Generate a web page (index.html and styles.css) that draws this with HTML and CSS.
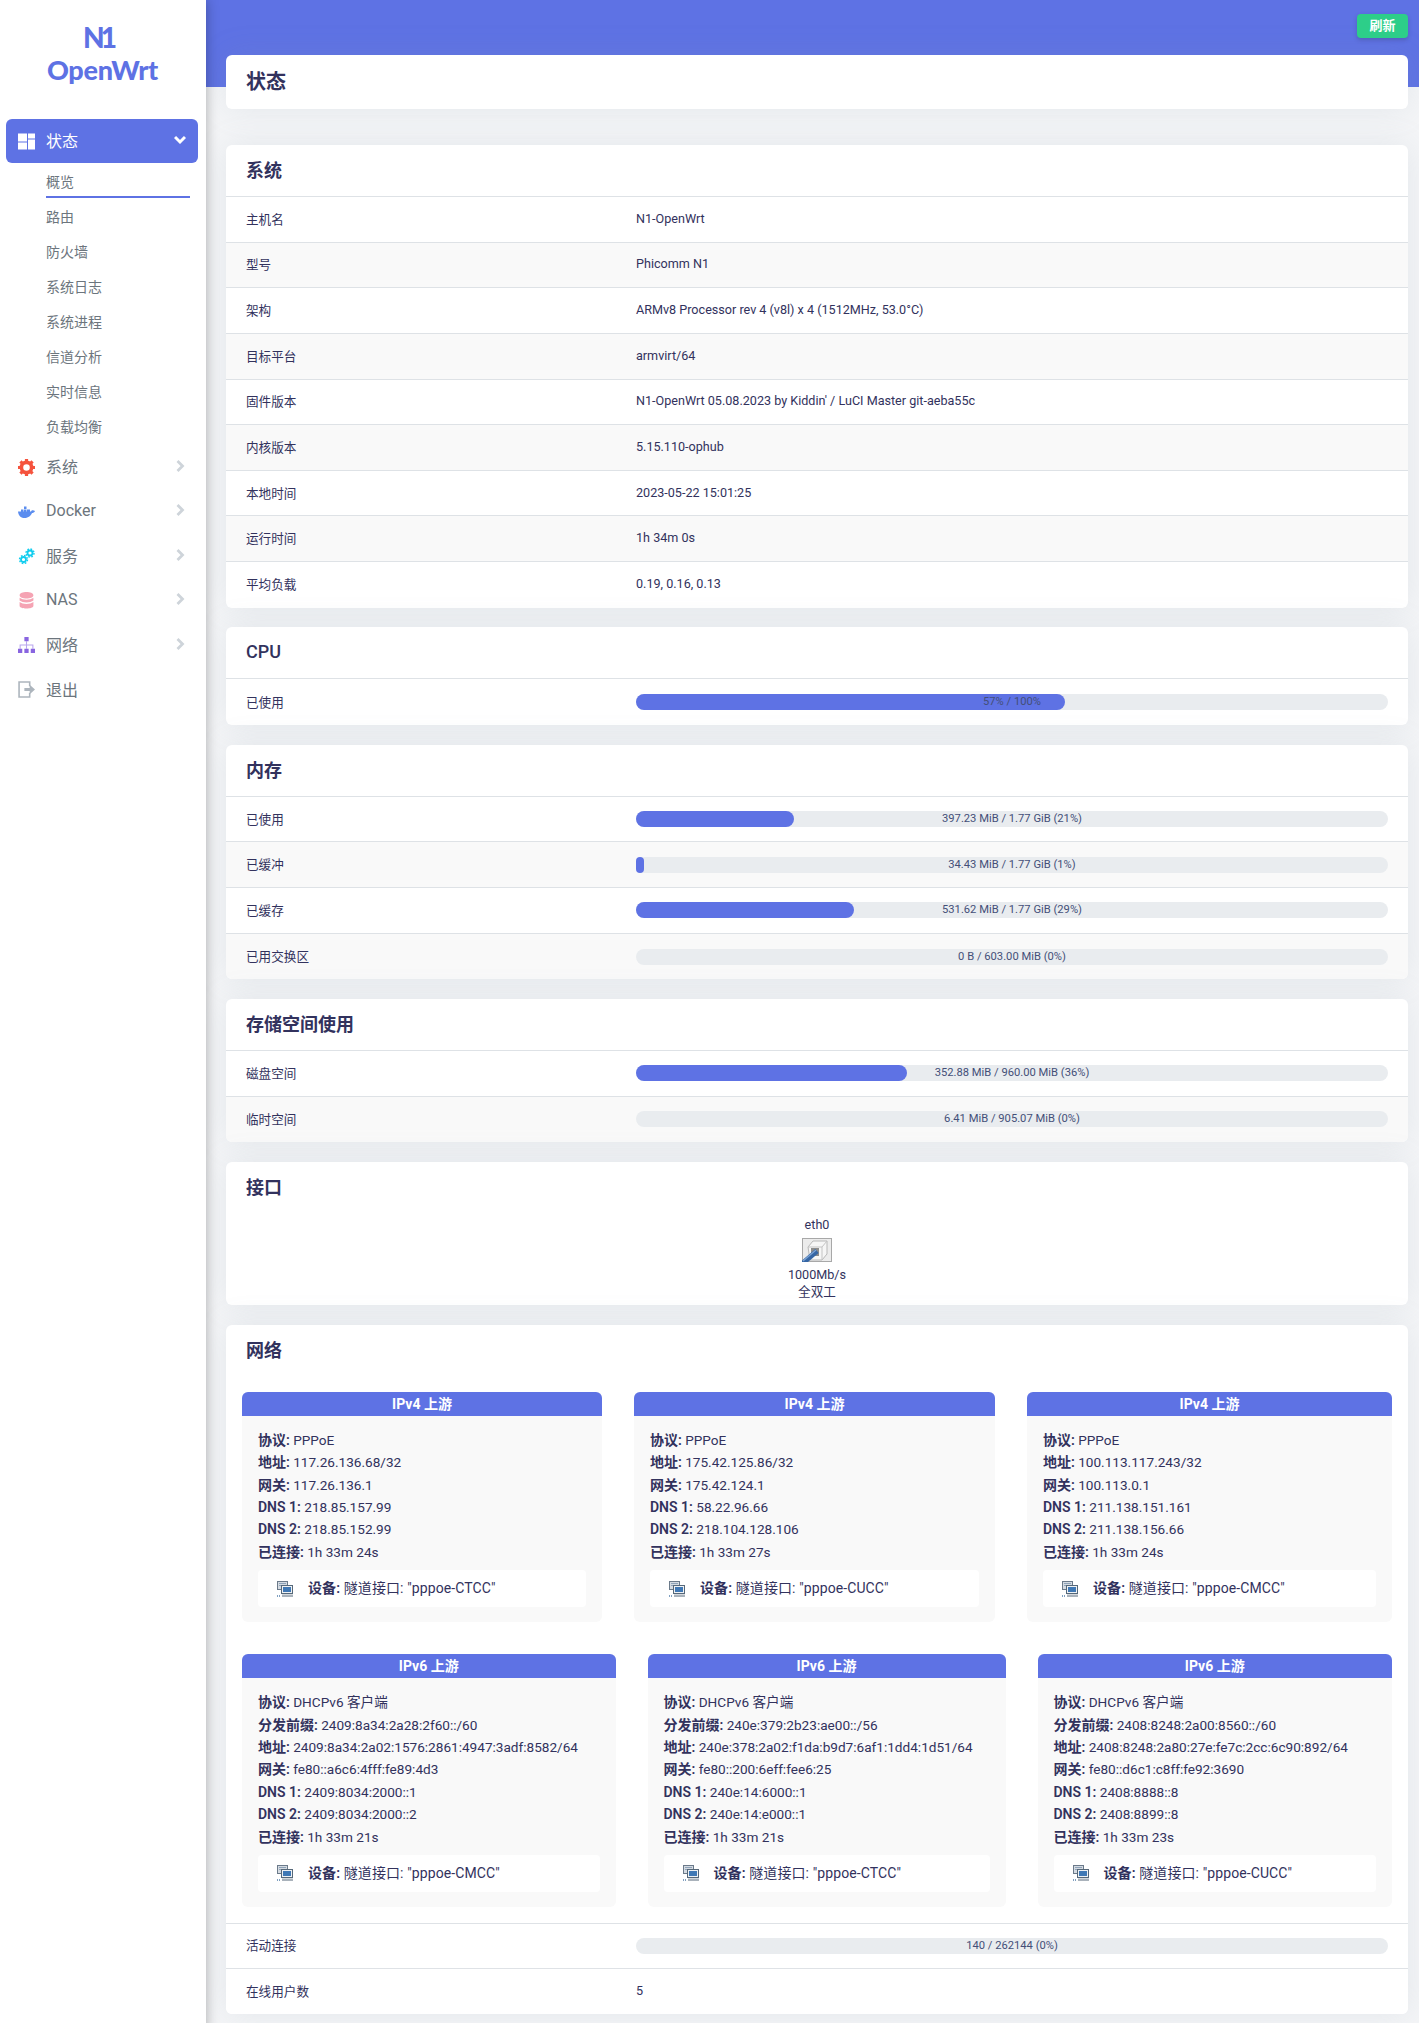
FILE: index.html
```html
<!DOCTYPE html>
<html>
<head>
  <title>状态 - N1-OpenWrt</title>
  <link rel="stylesheet" href="styles.css">
</head>
<body>
  <svg class="icon-defs">
    <symbol id="chevron-right" viewBox="0 0 12 12"><path d="M3.500 1l5 5-5 5" fill="none" stroke="#ced4da" stroke-width="2.800"/></symbol>
    <symbol id="device" viewBox="0 0 16 16">
      <rect x="0.500" y="0.500" width="10" height="8" fill="#d5dbe2" stroke="#6b7a8a"/>
      <path d="M2 2h7v1H2zM2 4h3v1H2z" fill="#8fa3b8"/>
      <rect x="4.500" y="4.500" width="11" height="8" fill="#eef1f4" stroke="#566879"/>
      <rect x="6" y="6" width="8" height="5" fill="#3f78b5"/>
      <path d="M5 13.500h11V16H5z" fill="#a9b2bb"/>
      <path d="M0 14h1v2H0zM2 14h1v2H2z" fill="#7f9fc0"/>
    </symbol>
  </svg>

  <div class="sidebar">
    <div class="logo">
      <div class="logo-n1">N1</div>
      <div class="logo-name">OpenWrt</div>
    </div>
    <div class="menu-item active">
      <svg class="menu-icon" viewBox="0 0 17 16"><path fill="#fff" d="M0 0h9v8H0zM10 0h7v5h-7zM0 9h9v7H0zM10 6h7v10h-7z"/></svg>
      <span>状态</span>
      <svg class="chevron" viewBox="0 0 12 12"><path d="M1 3l5 5 5-5" fill="none" stroke="#fff" stroke-width="3"/></svg>
    </div>
    <div class="sub-item current">概览</div>
    <div class="sub-item">路由</div>
    <div class="sub-item">防火墙</div>
    <div class="sub-item">系统日志</div>
    <div class="sub-item">系统进程</div>
    <div class="sub-item">信道分析</div>
    <div class="sub-item">实时信息</div>
    <div class="sub-item last">负载均衡</div>
    <div class="menu-item">
      <svg class="menu-icon" viewBox="0 0 16 16"><circle cx="8" cy="8" r="4.800" fill="none" stroke="#f5533d" stroke-width="3.400"/><path stroke="#f5533d" stroke-width="3" d="M8 0v3M8 13v3M0 8h3M13 8h3M2.300 2.300l2 2M11.700 11.700l2 2M13.700 2.300l-2 2M4.300 11.700l-2 2"/></svg>
      <span>系统</span>
      <svg class="chevron"><use href="#chevron-right"/></svg>
    </div>
    <div class="menu-item">
      <svg class="menu-icon" viewBox="0 0 17 16"><path fill="#5b8def" d="M0 8h3V6h2.500V8h.5V6h2.500V8h.5V6H12v2h1c.5-1.500 2.500-1.500 4-.5-.5 1.500-2 2-3 2-1 2.500-3.500 5-7.500 5C2.500 14.500.5 12 0 8zM6 3h2.500v2.500H6z"/></svg>
      <span>Docker</span>
      <svg class="chevron"><use href="#chevron-right"/></svg>
    </div>
    <div class="menu-item">
      <svg class="menu-icon" viewBox="0 0 17 16">
        <g fill="none" stroke="#11cdef">
          <circle cx="5.500" cy="11" r="2.500" stroke-width="1.800"/>
          <circle cx="5.500" cy="11" r="4" stroke-width="1.400" stroke-dasharray="1.700 1.440"/>
          <circle cx="12" cy="4.500" r="2.500" stroke-width="1.800"/>
          <circle cx="12" cy="4.500" r="4" stroke-width="1.400" stroke-dasharray="1.700 1.440"/>
        </g>
      </svg>
      <span>服务</span>
      <svg class="chevron"><use href="#chevron-right"/></svg>
    </div>
    <div class="menu-item">
      <svg class="menu-icon" viewBox="0 0 16 16"><path fill="#f5a3b3" d="M1.500 3c0-4 13-4 13 0s-13 4-13 0zM1.500 5.500c3 2.500 10 2.500 13 0V8c-3 2.500-10 2.500-13 0zM1.500 9.500c3 2.500 10 2.500 13 0V13c0 3.500-13 3.500-13 0z"/></svg>
      <span>NAS</span>
      <svg class="chevron"><use href="#chevron-right"/></svg>
    </div>
    <div class="menu-item">
      <svg class="menu-icon" viewBox="0 0 16 16"><path fill="none" stroke="#b9a6ee" d="M8 4v7M2 11V7.500h12V11"/><path fill="#8965e0" d="M6 0h4v4H6zM0 11h4v4H0zM6 11h4v4H6zM12 11h4v4h-4z"/></svg>
      <span>网络</span>
      <svg class="chevron"><use href="#chevron-right"/></svg>
    </div>
    <div class="menu-item">
      <svg class="menu-icon" viewBox="0 0 16 16"><path fill="none" stroke="#adb5bd" stroke-width="1.500" d="M11 5V1H1v14h10v-4"/><path fill="#adb5bd" d="M6 6.500h5V3.500L16 8l-5 4.500v-3H6z"/></svg>
      <span>退出</span>
    </div>
  </div>

  <div class="main">
    <div class="top-bar">
      <span class="refresh-btn">刷新</span>
    </div>
    <div class="content">
      <div class="card title-card"><h2>状态</h2></div>

      <div class="card">
        <h3>系统</h3>
        <div class="row"><div class="row-label">主机名</div><div class="row-value">N1-OpenWrt</div></div>
        <div class="row"><div class="row-label">型号</div><div class="row-value">Phicomm N1</div></div>
        <div class="row"><div class="row-label">架构</div><div class="row-value">ARMv8 Processor rev 4 (v8l) x 4 (1512MHz, 53.0°C)</div></div>
        <div class="row"><div class="row-label">目标平台</div><div class="row-value">armvirt/64</div></div>
        <div class="row"><div class="row-label">固件版本</div><div class="row-value">N1-OpenWrt 05.08.2023 by Kiddin' / LuCI Master git-aeba55c</div></div>
        <div class="row"><div class="row-label">内核版本</div><div class="row-value">5.15.110-ophub</div></div>
        <div class="row"><div class="row-label">本地时间</div><div class="row-value">2023-05-22 15:01:25</div></div>
        <div class="row"><div class="row-label">运行时间</div><div class="row-value">1h 34m 0s</div></div>
        <div class="row"><div class="row-label">平均负载</div><div class="row-value">0.19, 0.16, 0.13</div></div>
      </div>

      <div class="card">
        <h3 class="latin">CPU</h3>
        <div class="row"><div class="row-label">已使用</div><div class="progress"><div class="progress-fill" style="width: 57%"></div><span>57% / 100%</span></div></div>
      </div>

      <div class="card">
        <h3>内存</h3>
        <div class="row"><div class="row-label">已使用</div><div class="progress"><div class="progress-fill" style="width: 21%"></div><span>397.23 MiB / 1.77 GiB (21%)</span></div></div>
        <div class="row"><div class="row-label">已缓冲</div><div class="progress"><div class="progress-fill" style="width: 1%"></div><span>34.43 MiB / 1.77 GiB (1%)</span></div></div>
        <div class="row"><div class="row-label">已缓存</div><div class="progress"><div class="progress-fill" style="width: 29%"></div><span>531.62 MiB / 1.77 GiB (29%)</span></div></div>
        <div class="row"><div class="row-label">已用交换区</div><div class="progress"><span>0 B / 603.00 MiB (0%)</span></div></div>
      </div>

      <div class="card">
        <h3>存储空间使用</h3>
        <div class="row"><div class="row-label">磁盘空间</div><div class="progress"><div class="progress-fill" style="width: 36%"></div><span>352.88 MiB / 960.00 MiB (36%)</span></div></div>
        <div class="row"><div class="row-label">临时空间</div><div class="progress"><span>6.41 MiB / 905.07 MiB (0%)</span></div></div>
      </div>

      <div class="card iface-card">
        <h3 class="plain">接口</h3>
        <div class="iface">
          <div>eth0</div>
          <svg class="port-icon" viewBox="0 0 30 24">
            <rect x="0.500" y="0.500" width="29" height="23" fill="#ececec" stroke="#a8a8a8"/>
            <path d="M6 9l5-6h14v13l-5 6H8z" fill="#f6f6f6" stroke="#b8b8b8"/>
            <path d="M20 22V9l5-6M6 9h14" fill="none" stroke="#c4c4c4"/>
            <path d="M9 10h8v8H9z" fill="#8d8d8d"/>
            <path d="M1 25l14-12" stroke="#3566a5" stroke-width="5"/>
            <path d="M1 23l13-11" stroke="#7ea5d6" stroke-width="1.200"/>
          </svg>
          <div>1000Mb/s</div>
          <div>全双工</div>
        </div>
      </div>

      <div class="card">
        <h3 class="plain">网络</h3>
        <div class="net-grid net-v4">
          <div class="net-box">
            <div class="net-head">IPv4 上游</div>
            <div class="net-body">
              <div><b>协议:</b> PPPoE</div>
              <div><b>地址:</b> 117.26.136.68/32</div>
              <div><b>网关:</b> 117.26.136.1</div>
              <div><b>DNS 1:</b> 218.85.157.99</div>
              <div><b>DNS 2:</b> 218.85.152.99</div>
              <div><b>已连接:</b> 1h 33m 24s</div>
              <div class="device"><svg class="dev-icon"><use href="#device"/></svg><span><b>设备:</b> 隧道接口: "pppoe-CTCC"</span></div>
            </div>
          </div>
          <div class="net-box">
            <div class="net-head">IPv4 上游</div>
            <div class="net-body">
              <div><b>协议:</b> PPPoE</div>
              <div><b>地址:</b> 175.42.125.86/32</div>
              <div><b>网关:</b> 175.42.124.1</div>
              <div><b>DNS 1:</b> 58.22.96.66</div>
              <div><b>DNS 2:</b> 218.104.128.106</div>
              <div><b>已连接:</b> 1h 33m 27s</div>
              <div class="device"><svg class="dev-icon"><use href="#device"/></svg><span><b>设备:</b> 隧道接口: "pppoe-CUCC"</span></div>
            </div>
          </div>
          <div class="net-box">
            <div class="net-head">IPv4 上游</div>
            <div class="net-body">
              <div><b>协议:</b> PPPoE</div>
              <div><b>地址:</b> 100.113.117.243/32</div>
              <div><b>网关:</b> 100.113.0.1</div>
              <div><b>DNS 1:</b> 211.138.151.161</div>
              <div><b>DNS 2:</b> 211.138.156.66</div>
              <div><b>已连接:</b> 1h 33m 24s</div>
              <div class="device"><svg class="dev-icon"><use href="#device"/></svg><span><b>设备:</b> 隧道接口: "pppoe-CMCC"</span></div>
            </div>
          </div>
        </div>
        <div class="net-grid net-v6">
          <div class="net-box">
            <div class="net-head">IPv6 上游</div>
            <div class="net-body">
              <div><b>协议:</b> DHCPv6 客户端</div>
              <div><b>分发前缀:</b> 2409:8a34:2a28:2f60::/60</div>
              <div><b>地址:</b> 2409:8a34:2a02:1576:2861:4947:3adf:8582/64</div>
              <div><b>网关:</b> fe80::a6c6:4fff:fe89:4d3</div>
              <div><b>DNS 1:</b> 2409:8034:2000::1</div>
              <div><b>DNS 2:</b> 2409:8034:2000::2</div>
              <div><b>已连接:</b> 1h 33m 21s</div>
              <div class="device"><svg class="dev-icon"><use href="#device"/></svg><span><b>设备:</b> 隧道接口: "pppoe-CMCC"</span></div>
            </div>
          </div>
          <div class="net-box">
            <div class="net-head">IPv6 上游</div>
            <div class="net-body">
              <div><b>协议:</b> DHCPv6 客户端</div>
              <div><b>分发前缀:</b> 240e:379:2b23:ae00::/56</div>
              <div><b>地址:</b> 240e:378:2a02:f1da:b9d7:6af1:1dd4:1d51/64</div>
              <div><b>网关:</b> fe80::200:6eff:fee6:25</div>
              <div><b>DNS 1:</b> 240e:14:6000::1</div>
              <div><b>DNS 2:</b> 240e:14:e000::1</div>
              <div><b>已连接:</b> 1h 33m 21s</div>
              <div class="device"><svg class="dev-icon"><use href="#device"/></svg><span><b>设备:</b> 隧道接口: "pppoe-CTCC"</span></div>
            </div>
          </div>
          <div class="net-box">
            <div class="net-head">IPv6 上游</div>
            <div class="net-body">
              <div><b>协议:</b> DHCPv6 客户端</div>
              <div><b>分发前缀:</b> 2408:8248:2a00:8560::/60</div>
              <div><b>地址:</b> 2408:8248:2a80:27e:fe7c:2cc:6c90:892/64</div>
              <div><b>网关:</b> fe80::d6c1:c8ff:fe92:3690</div>
              <div><b>DNS 1:</b> 2408:8888::8</div>
              <div><b>DNS 2:</b> 2408:8899::8</div>
              <div><b>已连接:</b> 1h 33m 23s</div>
              <div class="device"><svg class="dev-icon"><use href="#device"/></svg><span><b>设备:</b> 隧道接口: "pppoe-CUCC"</span></div>
            </div>
          </div>
        </div>
        <div class="row white top-line"><div class="row-label">活动连接</div><div class="progress"><span>140 / 262144 (0%)</span></div></div>
        <div class="row white"><div class="row-label">在线用户数</div><div class="row-value">5</div></div>
      </div>
    </div>
  </div>
</body>
</html>
```

FILE: styles.css
```css
* {
  box-sizing: border-box;
}
html, body {
  margin: 0;
  padding: 0;
}
body {
  display: flex;
  min-height: 2023px;
  background-color: #f4f5f7;
  color: #32325d;
  font-family: Roboto, "Noto Sans CJK SC", sans-serif;
  font-size: 12.6px;
}
.icon-defs {
  display: none;
}

/* sidebar */
.sidebar {
  width: 206px;
  flex-shrink: 0;
  padding: 0 8px 0 6px;
  background-color: #fff;
  box-shadow: 0 0 12px rgba(0,0,0,0.3);
  position: relative;
  z-index: 2;
}
.logo {
  height: 119px;
  padding-top: 22px;
  padding-left: 1px;
  color: #5e72e4;
  text-align: center;
  font-family: Lato, sans-serif;
  font-weight: 900;
}
.logo-n1 {
  padding-right: 9px;
  font-size: 28px;
  line-height: 30px;
  letter-spacing: -4px;
}
.logo-name {
  margin-top: 1px;
  font-size: 27px;
  line-height: 34px;
  letter-spacing: -0.3px;
}
.menu-item {
  display: flex;
  align-items: center;
  height: 44.5px;
  padding: 0 12px;
  color: #6c757d;
  font-size: 16px;
}
.menu-item span {
  padding-bottom: 2px;
}
.menu-item.active {
  height: 44px;
  margin-bottom: 1px;
  background-color: #5e72e4;
  border-radius: 6px;
  color: #fff;
}
.menu-icon {
  width: 17px;
  height: 17px;
  margin-right: 11px;
  flex-shrink: 0;
}
.chevron {
  width: 12px;
  height: 12px;
  margin-left: auto;
  margin-bottom: 3px;
}
.sub-item {
  height: 35px;
  margin: 0 8px 0 40px;
  padding-top: 8px;
  color: #6c757d;
  font-size: 14px;
  line-height: 20px;
}
.sub-item.current {
  height: 34px;
  margin-bottom: 1px;
  border-bottom: 2px solid #5e72e4;
}
.sub-item.last {
  margin-bottom: 1px;
}

/* main */
.main {
  flex: 1;
  min-width: 0;
  position: relative;
}
.top-bar {
  height: 87px;
  padding: 14px 11px 0 0;
  background-color: #5e72e4;
  text-align: right;
}
.refresh-btn {
  display: inline-block;
  width: 51px;
  height: 24px;
  background-color: #2dce89;
  border-radius: 4px;
  box-shadow: 0 2px 4px rgba(50,50,93,0.3);
  color: #fff;
  font-size: 13px;
  font-weight: 700;
  line-height: 23px;
  text-align: center;
}
.content {
  padding: 0 11px 0 20px;
  margin-top: -32px;
}
.card {
  background-color: #fff;
  border-radius: 6px;
  box-shadow: 0 0 32px rgba(136,152,170,0.15);
  margin-bottom: 19.7px;
  overflow: hidden;
}
.title-card {
  height: 54px;
  margin-bottom: 36px;
}
h2 {
  margin: 0;
  padding: 0 20px;
  font-size: 20px;
  font-weight: 700;
  line-height: 54px;
}
h3 {
  margin: 0;
  height: 52px;
  padding: 0 20px;
  border-bottom: 1px solid #dee2e6;
  font-size: 18px;
  font-weight: 600;
  line-height: 52px;
}
h3.latin {
  font-weight: 500;
  line-height: 50px;
}
h3.plain {
  border-bottom: none;
}

/* rows */
.row {
  display: flex;
  align-items: center;
  height: 45.65px;
  padding: 0 20px;
  border-bottom: 1px solid #dee2e6;
}
.row:last-child {
  border-bottom: none;
}
.row:nth-of-type(even) {
  background-color: #f9f9f9;
}
.row.white {
  background-color: #fff;
}
.row.top-line {
  border-top: 1px solid #dee2e6;
}
.row-label {
  width: 390px;
  flex-shrink: 0;
  padding-bottom: 2px;
}
.row-value {
  padding-bottom: 2px;
}

/* progress */
.progress {
  flex: 1;
  position: relative;
  height: 16px;
  background-color: #e9ecef;
  border-radius: 8px;
  text-align: center;
}
.progress-fill {
  position: absolute;
  top: 0;
  left: 0;
  height: 100%;
  background-color: #5e72e4;
  border-radius: 8px;
}
.progress span {
  display: block;
  position: relative;
  color: #444f78;
  font-size: 11.2px;
  line-height: 15px;
}

/* interface */
.iface-card {
  height: 143px;
}
.iface {
  margin-top: 2px;
  text-align: center;
  line-height: 17px;
}
.port-icon {
  display: block;
  width: 30px;
  height: 24px;
  margin: 5.4px auto 3.5px;
}

/* network boxes */
.net-grid {
  display: grid;
  column-gap: 32px;
  padding: 0 16px;
}
.net-v4 {
  grid-template-columns: 360fr 361fr 365fr;
  margin-top: 15px;
}
.net-v6 {
  grid-template-columns: 373.5fr 358fr 354.5fr;
  margin-top: 32px;
  margin-bottom: 16px;
}
.net-box {
  background-color: #f9f9f9;
  border-radius: 6px;
  overflow: hidden;
}
.net-head {
  height: 24px;
  background-color: #5e72e4;
  color: #fff;
  font-size: 14px;
  font-weight: 700;
  line-height: 24px;
  text-align: center;
}
.net-body {
  padding: 13px 16px 15px;
  font-size: 13.6px;
  line-height: 22.4px;
}
.net-body b {
  font-size: 14px;
  font-weight: 600;
}
.device {
  display: flex;
  align-items: center;
  height: 37px;
  margin-top: 7px;
  padding-left: 19px;
  background-color: #fff;
  border-radius: 4px;
  font-size: 14px;
  letter-spacing: 0.1px;
}
.dev-icon {
  width: 16px;
  height: 16px;
  margin-right: 15px;
  flex-shrink: 0;
}
```
